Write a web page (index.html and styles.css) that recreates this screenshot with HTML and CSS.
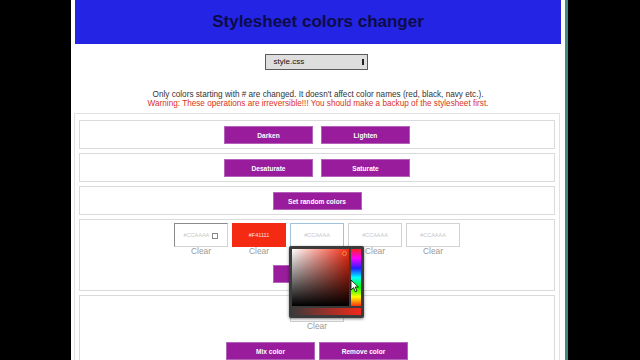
FILE: index.html
```html
<!DOCTYPE html>
<html lang="en">
<head>
  <meta charset="UTF-8">
  <meta name="viewport" content="width=device-width, initial-scale=1.0">
  <link rel="stylesheet" href="styles.css">
  <title>Stylesheet colors changer</title>
</head>
<body>

<div class="page">
  <div class="header">
    <h1>Stylesheet colors changer</h1>
  </div>

  <div class="file-row">
    <div class="select">style.css<span class="select-arrow"></span></div>
  </div>

  <p class="info">
    Only colors starting with # are changed. It doesn't affect color names (red, black, navy etc.).<br>
    <span class="warning">Warning: These operations are irreversible!!! You should make a backup of the stylesheet first.</span>
  </p>

  <div class="tools">
    <div class="box">
      <button>Darken</button>
      <button>Lighten</button>
    </div>
    <div class="box">
      <button>Desaturate</button>
      <button>Saturate</button>
    </div>
    <div class="box">
      <button>Set random colors</button>
    </div>

    <div class="box box-colors">
      <div class="swatches">
        <div class="swatch">
          <div class="color-input first">#CCAAAA <span class="pick-icon"></span></div>
          <div class="clear">Clear</div>
        </div>
        <div class="swatch">
          <div class="color-input red">#F41111</div>
          <div class="clear">Clear</div>
        </div>
        <div class="swatch">
          <div class="color-input focused">#CCAAAA</div>
          <div class="clear">Clear</div>
          <div class="picker">
            <div class="picker-top">
              <div class="sv"><span class="sv-dot"></span></div>
              <div class="hue"></div>
            </div>
            <div class="alpha"></div>
            <svg class="cursor" width="9" height="14" viewBox="0 0 9 14">
              <path d="M1 1 L1 11 L3.5 8.6 L5.4 12.8 L7 12 L5.2 8 L8.3 8 Z" fill="#fff" stroke="#000" stroke-width="0.8"/>
            </svg>
          </div>
        </div>
        <div class="swatch">
          <div class="color-input">#CCAAAA</div>
          <div class="clear">Clear</div>
        </div>
        <div class="swatch">
          <div class="color-input">#CCAAAA</div>
          <div class="clear">Clear</div>
        </div>
      </div>
      <button>Set colors</button>
    </div>

    <div class="box box-mix">
      <div class="swatches">
        <div class="swatch">
          <div class="color-input">#CCAAAA</div>
          <div class="clear">Clear</div>
        </div>
      </div>
      <div class="mix-buttons">
        <button>Mix color</button>
        <button>Remove color</button>
      </div>
    </div>
  </div>
</div>

</body>
</html>
```

FILE: styles.css
```css
body {
  margin: 0;
  background-color: #000;
  font-family: "Liberation Sans", Arial, sans-serif;
  height: 360px;
  overflow: hidden;
}

.page {
  width: 486px;
  min-height: 360px;
  margin-left: 71px;
  padding: 0 4px;
  background-color: #fff;
  border-right: 3px solid #3f8a82;
}

.header {
  height: 44px;
  background-color: #2424e4;
  display: flex;
  align-items: center;
  justify-content: center;
}

.header h1 {
  margin: 0;
  font-size: 17px;
  color: #0c0c48;
}

.file-row {
  display: flex;
  justify-content: center;
  margin-top: 10px;
  padding-right: 4px;
}

.select {
  width: 93px;
  height: 14px;
  padding-left: 8px;
  background-color: #dedede;
  border: 1px solid #5a5a5a;
  font-size: 8px;
  line-height: 14px;
  color: #111;
  position: relative;
}

.select-arrow {
  position: absolute;
  right: 3px;
  top: 4px;
  width: 2px;
  height: 6px;
  background-color: #222;
}

.info {
  margin: 20px 0 0;
  text-align: center;
  font-size: 8.2px;
  line-height: 9px;
  color: #333;
}

.warning {
  color: #d8331c;
}

.tools {
  margin: 5px 1px 0 -1px;
  border: 1px solid #e2e2e2;
  border-bottom: none;
  padding: 6px 4px 0;
  display: flex;
  flex-direction: column;
  gap: 4px;
}

.box {
  border: 1px solid #dadada;
  padding: 5px 0 4px;
  display: flex;
  justify-content: center;
  gap: 8px;
}

button {
  width: 89px;
  height: 18px;
  padding: 0;
  background-color: #991c9c;
  border: 1px solid #b262b8;
  color: #fff;
  font-family: "Liberation Sans", Arial, sans-serif;
  font-weight: bold;
  font-size: 6.6px;
}

.box-colors {
  flex-direction: column;
  align-items: center;
  gap: 9px;
  padding: 3px 0 7px;
}

.swatches {
  display: flex;
  gap: 4px;
}

.swatch {
  width: 54px;
  position: relative;
}

.color-input {
  height: 22px;
  border: 1px solid #d2d2d2;
  font-size: 5.5px;
  line-height: 22px;
  text-align: center;
  color: #c8c8c8;
}

.color-input.first {
  border-top-color: #8a8a8a;
  border-left-color: #8a8a8a;
}

.pick-icon {
  display: inline-block;
  width: 4px;
  height: 4px;
  margin-left: 2px;
  border: 1px solid #888;
  vertical-align: middle;
}

.color-input.red {
  background-color: #f42a12;
  border-color: #f42a12;
  color: #fde0dc;
}

.color-input.focused {
  border-color: #9fc3de;
}

.clear {
  font-size: 8.4px;
  line-height: 9px;
  text-align: center;
  color: #999;
}

.picker {
  position: absolute;
  left: -1px;
  top: 23px;
  width: 69px;
  padding: 3px;
  background-color: #3c3a3a;
  border-radius: 2px;
  box-shadow: 0 1px 3px rgba(0, 0, 0, 0.5);
  z-index: 2;
}

.picker-top {
  display: flex;
  gap: 2px;
}

.sv {
  width: 57px;
  height: 57px;
  position: relative;
  background: linear-gradient(to top, #000, transparent),
    linear-gradient(to right, #fff, #f22a12);
}

.sv-dot {
  position: absolute;
  right: 2px;
  top: 2px;
  width: 3px;
  height: 3px;
  border: 1px solid #f08a40;
  border-radius: 50%;
}

.hue {
  width: 10px;
  height: 57px;
  background: linear-gradient(to bottom, #ff2020, #ff00ff 16%, #2020ff 34%, #00ffff 50%, #00ff00 67%, #ffff00 84%, #ff3010);
}

.alpha {
  height: 7px;
  margin-top: 2px;
  background: linear-gradient(to right, #3c3a3a, #f2281a);
}

.cursor {
  position: absolute;
  left: 61px;
  top: 33px;
}

.box-mix {
  flex-direction: column;
  align-items: center;
  gap: 11px;
  padding: 2px 0 0;
}

.mix-buttons {
  display: flex;
  gap: 4px;
}
```
